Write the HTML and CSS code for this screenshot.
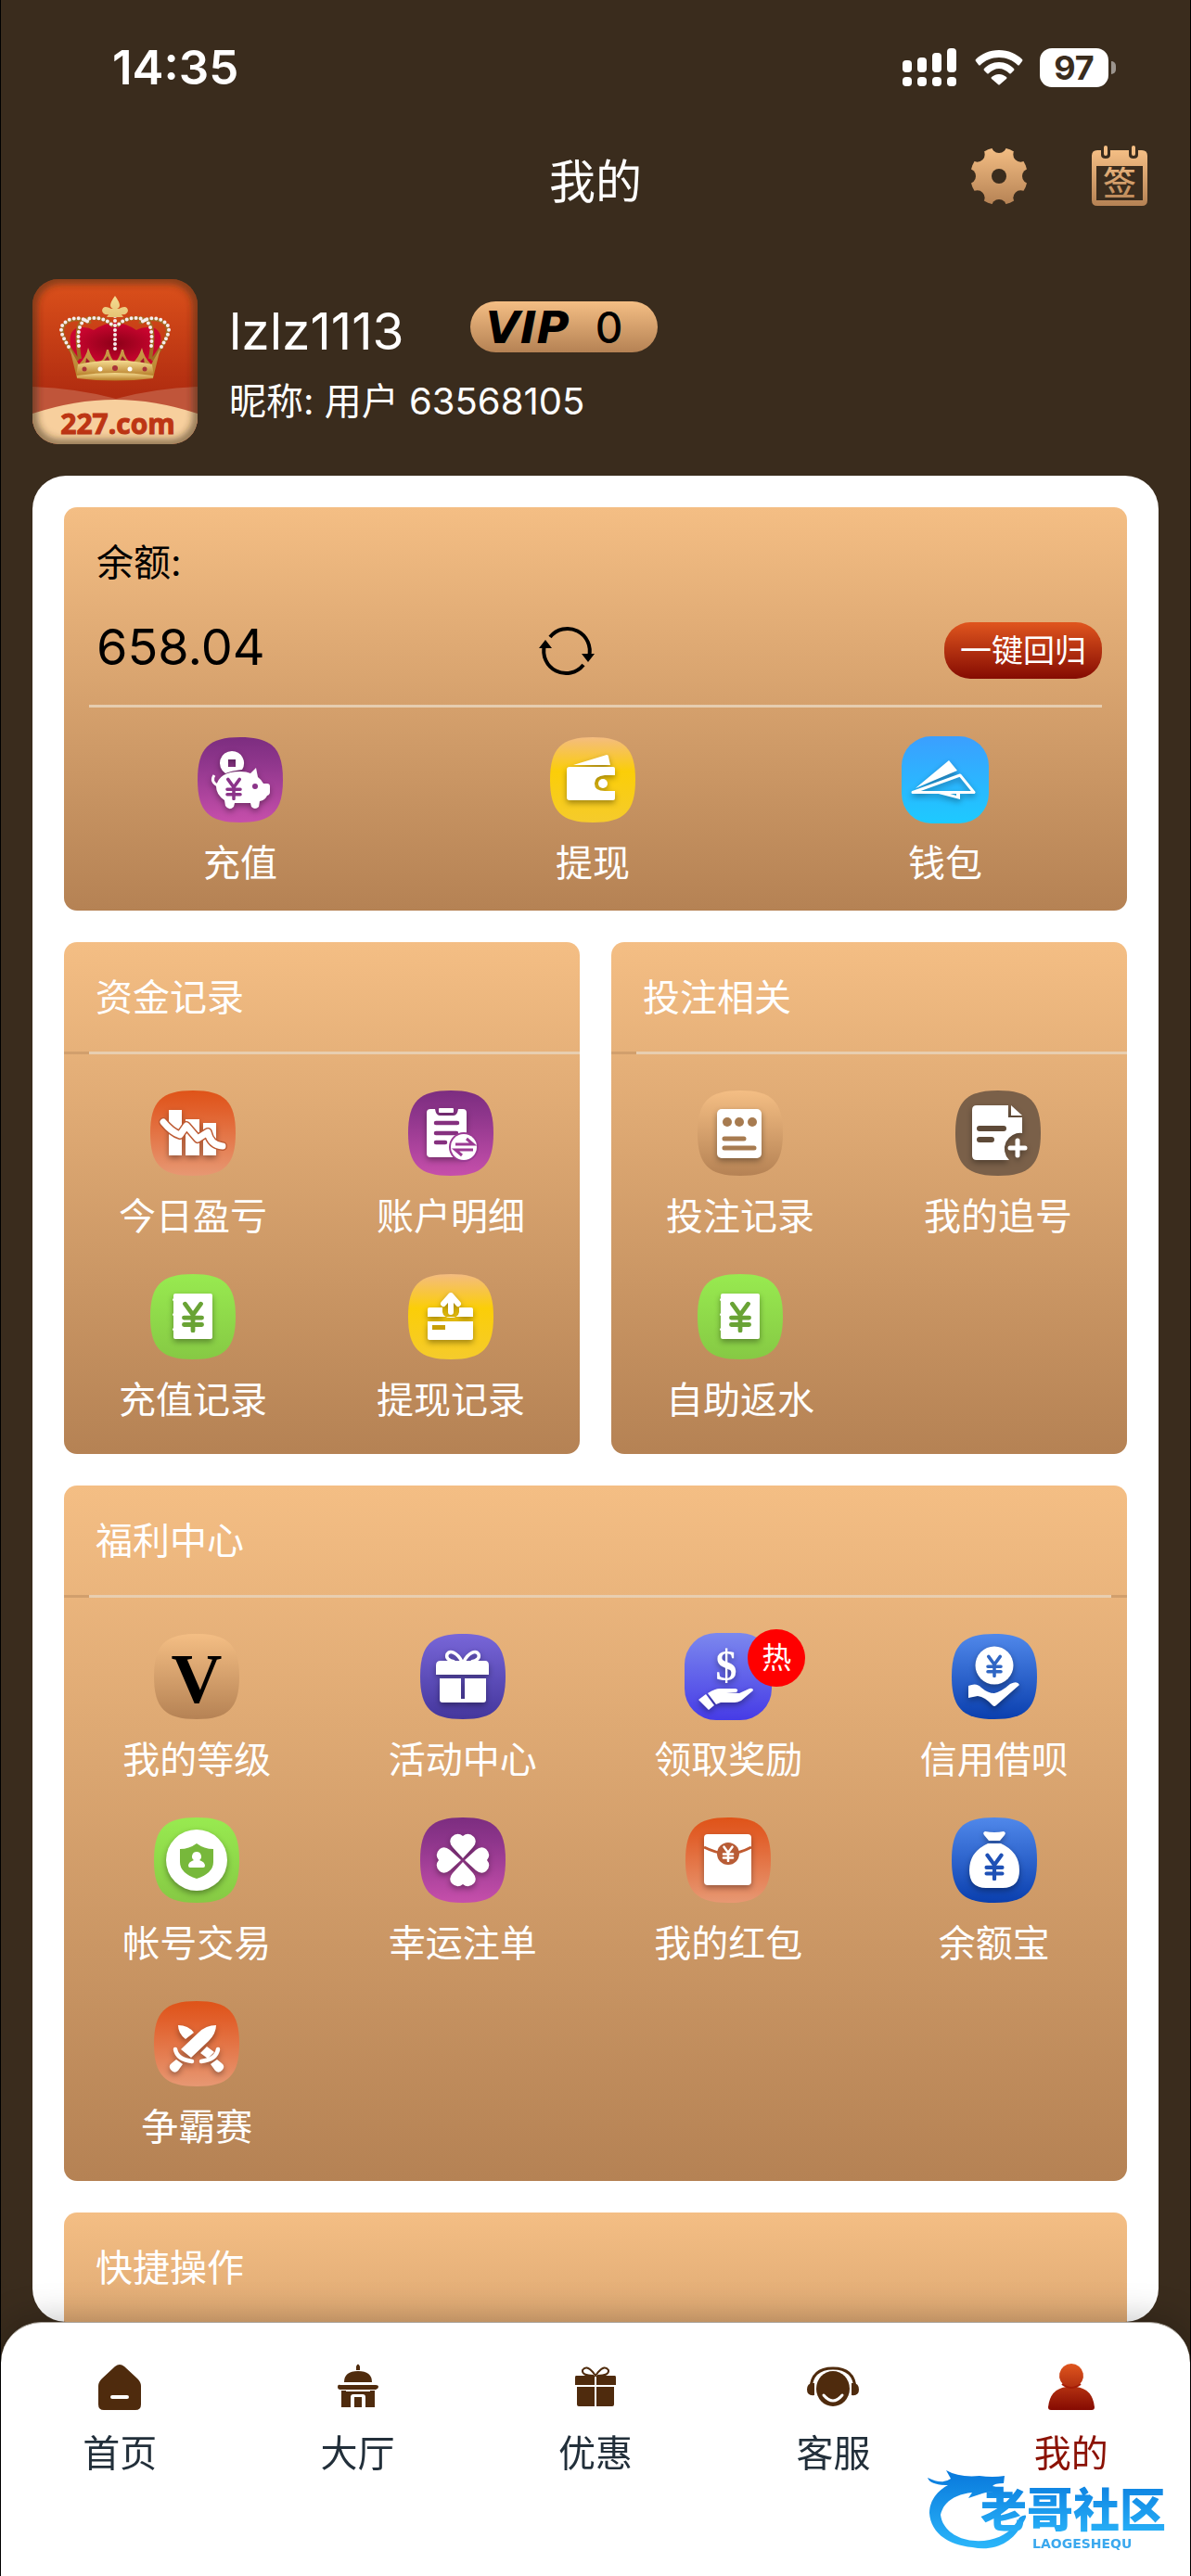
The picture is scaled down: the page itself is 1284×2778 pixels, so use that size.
FILE: index.html
```html
<!DOCTYPE html>
<html lang="zh-CN">
<head>
<meta charset="utf-8">
<meta name="viewport" content="width=device-width, initial-scale=1">
<title>我的</title>
<link rel="stylesheet" href="styles.css">
</head>
<body>
<svg class="defs" width="0" height="0" aria-hidden="true">
  <defs>
    <linearGradient id="g-purple" x1="0" y1="0" x2="0" y2="1"><stop offset="0" stop-color="#7c2d80"/><stop offset=".3" stop-color="#8f368c"/><stop offset="1" stop-color="#c64fab"/></linearGradient>
    <linearGradient id="g-yellow" x1="0" y1="0" x2="0" y2="1"><stop offset="0" stop-color="#f4bc80"/><stop offset=".4" stop-color="#fbce08"/><stop offset="1" stop-color="#f5cb2c"/></linearGradient>
    <linearGradient id="g-sky" x1="0" y1="0" x2="0" y2="1"><stop offset="0" stop-color="#3b9fff"/><stop offset="1" stop-color="#1dcaff"/></linearGradient>
    <linearGradient id="g-orange" x1="0" y1="0" x2="0" y2="1"><stop offset="0" stop-color="#df5318"/><stop offset=".2" stop-color="#e15e29"/><stop offset="1" stop-color="#e79873"/></linearGradient>
    <linearGradient id="g-green" x1="0" y1="0" x2="0" y2="1"><stop offset="0" stop-color="#98ea50"/><stop offset="1" stop-color="#86c944"/></linearGradient>
    <linearGradient id="g-tan" x1="0" y1="0" x2="0" y2="1"><stop offset="0" stop-color="#f4be84"/><stop offset="1" stop-color="#b58254"/></linearGradient>
    <linearGradient id="g-violet" x1="0" y1="0" x2="0" y2="1"><stop offset="0" stop-color="#7866d8"/><stop offset="1" stop-color="#44369c"/></linearGradient>
    <linearGradient id="g-indigo" x1="0" y1="0" x2="0" y2="1"><stop offset="0" stop-color="#7c88ee"/><stop offset="1" stop-color="#463be6"/></linearGradient>
    <linearGradient id="g-blue" x1="0" y1="0" x2="0" y2="1"><stop offset="0" stop-color="#5088ea"/><stop offset="1" stop-color="#0a3fae"/></linearGradient>
    <linearGradient id="g-red" x1="0" y1="0" x2="0" y2="1"><stop offset="0" stop-color="#e0561e"/><stop offset="1" stop-color="#850b02"/></linearGradient>
    <linearGradient id="g-gold" x1="0" y1="0" x2="0" y2="1"><stop offset="0" stop-color="#f6dd92"/><stop offset="1" stop-color="#b47a24"/></linearGradient>
    <linearGradient id="g-wave" x1="0" y1="0" x2="0" y2="1"><stop offset="0" stop-color="#0878dc"/><stop offset="1" stop-color="#2bb6fa"/></linearGradient>
    <symbol id="tile" viewBox="0 0 100 100"><path d="M50 4C84 4 96 16 96 50S84 96 50 96 4 84 4 50 16 4 50 4Z"/></symbol>
    <symbol id="yen" viewBox="-12 -16 24 32"><path d="M-8-13 0-2 8-13M0-2V14M-9 1H9M-9 8H9" fill="none" stroke="currentColor" stroke-width="4.500" stroke-linecap="round"/></symbol>
    <symbol id="book" viewBox="0 0 100 100"><path fill="#fff" d="M31 25h38q2 0 2 2v45q0 2-2 2H31q-2 0-2-2V65q-2-1 0-3V49q-2-1 0-3V33q-2-1 0-3v-3q0-2 2-2Z"/></symbol>
  </defs>
</svg>

<div class="app">
  <header class="top">
    <div class="status">
      <time class="clock">14:35</time>
      <div class="indicators">
        <svg width="60" height="42" viewBox="0 0 60 42" fill="#fff" aria-label="信号"><rect x="0" y="13" width="10" height="13" rx="4"/><rect x="16" y="10" width="10" height="16" rx="4"/><rect x="32" y="5" width="10" height="21" rx="4"/><rect x="48" y="0" width="10" height="26" rx="4"/><rect x="0" y="31" width="10" height="10" rx="4"/><rect x="16" y="31" width="10" height="10" rx="4"/><rect x="32" y="31" width="10" height="10" rx="4"/><rect x="48" y="31" width="10" height="10" rx="4"/></svg>
        <svg width="52" height="38" viewBox="0 0 52 38" fill="#fff" aria-label="无线网络"><path d="M26 0C16 0 7 4 1 10q-1 1 0 2l3 4q1 1 2 0c5-5 12-8 20-8s15 3 20 8q1 1 2 0l3-4q1-1 0-2C45 4 36 0 26 0Z"/><path d="M26 13c-7 0-12 3-16 7q-1 1 0 2l3 3q1 1 2 0c3-3 7-5 11-5s8 2 11 5q1 1 2 0l3-3q1-1 0-2c-4-4-9-7-16-7Z"/><path d="M26 26c-3 0-5 1-8 3q-1 1 0 2l7 6q1 1 2 0l7-6q1-1 0-2c-3-2-5-3-8-3Z"/></svg>
        <div class="battery"><span class="battery-level">97</span><i class="battery-tip"></i></div>
      </div>
    </div>

    <div class="titlebar">
      <h1 class="title">我的</h1>
      <div class="actions">
        <button class="icon-btn" aria-label="设置">
          <svg width="64" height="64" viewBox="0 0 64 64">
            <mask id="gear"><rect width="64" height="64" fill="#fff"/><circle cx="32" cy="32" r="8"/><g id="bites"><circle cx="32" cy="-1" r="8"/><circle cx="32" cy="65" r="8"/><circle cx="-1" cy="32" r="8"/><circle cx="65" cy="32" r="8"/></g><use href="#bites" transform="rotate(45 32 32)"/></mask>
            <circle cx="32" cy="32" r="31" fill="url(#g-tan)" mask="url(#gear)"/>
          </svg>
        </button>
        <button class="icon-btn" aria-label="签到">
          <svg width="64" height="66" viewBox="0 0 64 66"><path fill="url(#g-tan)" fill-rule="evenodd" d="M8 5h4v5q0 4 5 4t5-4V5h20v5q0 4 5 4t5-4V5h4q6 0 6 6v48q0 6-6 6H8q-6 0-6-6V11q0-6 6-6ZM7 22v37h50V22Z"/><rect x="15" y="0" width="4" height="11" rx="2" fill="#f4be84"/><rect x="45" y="0" width="4" height="11" rx="2" fill="#f4be84"/><text class="sign" x="32" y="54" text-anchor="middle" fill="url(#g-tan)">签</text></svg>
        </button>
      </div>
    </div>

    <section class="profile">
      <svg class="avatar" viewBox="0 0 178 178" role="img" aria-label="227.com">
        <defs>
          <linearGradient id="avatar-bg" x1="0" y1="0" x2="0" y2="1"><stop offset="0" stop-color="#dc511b"/><stop offset=".7" stop-color="#b02c10"/></linearGradient>
          <radialGradient id="velvet"><stop offset="0" stop-color="#8d0018"/><stop offset="1" stop-color="#cc0530"/></radialGradient>
          <filter id="soft"><feGaussianBlur stdDeviation="4"/></filter>
        </defs>
        <rect width="178" height="178" fill="url(#avatar-bg)"/>
        <path fill="#c0553a" d="M0 116Q50 118 90 129 130 118 178 116v40H0Z"/>
        <path fill="#f7cf9d" d="M0 145Q46 130 89 130t89 15v33H0Z"/>
        <path fill="url(#velvet)" d="M45 84Q35 60 47 53 58 50 66 55q12-8 23-8t23 8q8-5 20-2 12 7 2 31l-6 8H50Z"/>
        <path fill="none" stroke="#a06a22" stroke-width="4" d="M49 88C36 70 28 57 34 49c8-9 26-6 28-1M129 88c13-18 21-31 15-39-8-9-26-6-28-1M51 86C45 50 50 42 66 42q14 0 21 9M127 86c6-36 1-44-15-44q-14 0-21 9"/>
        <path fill="none" stroke="#f6ecec" stroke-width="4" stroke-linecap="round" stroke-dasharray="0 5" d="M39 73C30 58 28 52 36 46c8-6 22-5 26 3M139 73c9-15 11-21 3-27-8-6-22-5-26 3M50 72c-2-20 2-30 16-30q14 0 21 9M128 72c2-20-2-30-16-30q-14 0-21 9M89 40v38"/>
        <path fill="url(#g-gold)" d="M89 18q-5 7-5 10 0 3 3 4h-2q-9-5-10 2 1 5 7 4l-2 3h18l-2-3q6 1 7-4-1-7-10-2h-2q3-1 3-4 0-3-5-10ZM40 74l10 18q8-8 10-18 4 12 10 16 8-2 10-14h2q2 9 7 14 5-5 7-14h2q2 12 10 14 6-4 10-16 2 10 10 18l10-18-8 33H48Z"/>
        <path fill="#a2152c" d="m58 85 4 4-5 4Zm23-2 3 6-9 2Zm16 0-3 6 9 2Zm23 2-4 4 5 4Z"/>
        <path fill="url(#g-gold)" d="M49 92q40-9 80 0l2 13q-42-7-84 0Z"/><path fill="url(#g-gold)" d="M48 104q41-6 82 0v3q-41 5-82 0Z"/>
        <g fill="#a93438"><circle cx="56" cy="97" r="2.500"/><circle cx="89" cy="96" r="3"/><circle cx="121" cy="97" r="2.500"/></g><g fill="#fff"><circle cx="73" cy="97" r="2.500"/><circle cx="105" cy="97" r="2.500"/></g>
        <text class="avatar-name" x="92" y="167" text-anchor="middle">227.com</text>
        <rect width="178" height="178" rx="30" fill="none" stroke="#3a2c1d" stroke-opacity=".7" stroke-width="8" filter="url(#soft)"/>
      </svg>
      <div class="who">
        <div class="name-row"><span class="name">lzlz1113</span><span class="vip"><b>VIP</b><span>0</span></span></div>
        <p class="nick">昵称: 用户 63568105</p>
      </div>
    </section>
  </header>

  <main class="panel">
    <section class="card">
      <div class="balance">
        <p class="balance-label">余额:</p>
        <div class="balance-row">
          <span class="amount">658.04</span>
          <button class="icon-btn refresh" aria-label="刷新余额">
            <svg width="60" height="56" viewBox="0 0 60 56"><path d="M12 13A24 24 0 0 1 54 34M48 43A24 24 0 0 1 6 22" fill="none" stroke="#000" stroke-width="4"/><path d="m0 25 7-9 7 9ZM46 31h14l-7 9Z"/></svg>
          </button>
          <button class="recall">一键回归</button>
        </div>
      </div>
      <div class="grid three">
        <a class="item" href="#deposit"><svg class="ico" viewBox="0 0 100 100"><use href="#tile" fill="url(#g-purple)"/><g class="glyph"><path fill-rule="evenodd" d="M41 19a13 13 0 0 1 11 20q-11 1-18 4a13 13 0 0 1 7-24Zm-4 9v8h8v-8Z"/><path d="M50 41q7 0 11 2l6-6 2 10q4 3 6 7h4q3 0 3 3v6q0 3-3 4-2 5-8 6l-1 6q-4 4-8 0l-1-4H44l-1 4q-5 5-9-1l-1-6q-9-6-9-15 3-16 26-16Z"/><path d="M27 57Q17 52 22 45" fill="none" stroke="#fff" stroke-width="3"/></g><circle cx="66" cy="57" r="3" fill="#8b3489"/><use href="#yen" x="33" y="47" width="20" height="25" color="#8b3489"/></svg><span>充值</span></a>
        <a class="item" href="#withdraw"><svg class="ico" viewBox="0 0 100 100"><use href="#tile" fill="url(#g-yellow)"/><g class="glyph"><path d="M29 34 65 23q2 0 2 2l2 9Z"/><path d="M25 36h47q2 0 2 2v7H63q-11 1-11 9t11 8h11v8q0 2-2 2H25q-3 0-3-3V39q0-3 3-3Z"/><circle cx="61" cy="54" r="5"/></g></svg><span>提现</span></a>
        <a class="item" href="#wallet"><svg class="ico" viewBox="0 0 100 100"><rect x="3" y="3" width="94" height="94" rx="32" fill="url(#g-sky)"/><g class="glyph"><path d="M18 59 54 29l9 11Z"/><path d="M15 63.500 66 45l15 18.500Z" fill="none" stroke="#fff" stroke-width="3" stroke-linejoin="round"/><path d="m39 64 27 7V64l-4 0v3l-10-3Z"/></g></svg><span>钱包</span></a>
      </div>
    </section>

    <div class="pair">
      <section class="card">
        <h2 class="head">资金记录</h2>
        <div class="grid two">
          <a class="item" href="#profit"><svg class="ico" viewBox="0 0 100 100"><use href="#tile" fill="url(#g-orange)"/><g class="glyph"><path d="M24 25h14v49H24ZM42 35h15v39H42ZM61 39h14v35H61Z"/></g><g fill="none" stroke-linecap="round" stroke-linejoin="round"><path d="M18 38Q27 49 36 52L43 42 55 56 66 49Q69 63 82 64" stroke="#bd5a33" stroke-width="10"/><path d="M18 38Q27 49 36 52L43 42 55 56 66 49Q69 63 82 64" stroke="#fff" stroke-width="7"/></g></svg><span>今日盈亏</span></a>
          <a class="item" href="#detail"><svg class="ico" viewBox="0 0 100 100"><use href="#tile" fill="url(#g-purple)"/><g class="glyph"><path d="M28 24h5q1 7 5 7h15q4 0 5-7h5q4 0 4 4v44q0 4-4 4H28q-4 0-4-4V28q0-4 4-4Z"/><rect x="37" y="23" width="16" height="5" rx="1"/></g><path d="M34 39h23M34 50h22M34 60h10" stroke="#85307f" stroke-width="4.500" stroke-linecap="round"/><circle cx="64" cy="65" r="16" fill="#9b3a93"/><circle cx="64" cy="65" r="14" fill="#fff"/><path d="M55 62h19l-7-6M74 68H55l7 6" fill="none" stroke="#9b3a93" stroke-width="3"/></svg><span>账户明细</span></a>
          <a class="item" href="#deposit-log"><svg class="ico" viewBox="0 0 100 100"><use href="#tile" fill="url(#g-green)"/><g class="glyph"><use href="#book"/></g><use href="#yen" x="35" y="33" width="30" height="34" color="#69a335"/></svg><span>充值记录</span></a>
          <a class="item" href="#withdraw-log"><svg class="ico" viewBox="0 0 100 100"><use href="#tile" fill="url(#g-yellow)"/><g class="glyph"><path d="M27 40h14v5q1 6 9 6t9-6v-5h13q2 0 2 2v8H25v-8q0-2 2-2ZM25 55h49v18q0 2-2 2H27q-2 0-2-2Z"/><path d="m42 36 8-9 8 9M50 28v17" fill="none" stroke="#fff" stroke-width="6" stroke-linecap="round" stroke-linejoin="round"/></g><path d="M30 59h14v5H30Z" fill="#c79e08"/></svg><span>提现记录</span></a>
        </div>
      </section>

      <section class="card">
        <h2 class="head">投注相关</h2>
        <div class="grid two">
          <a class="item" href="#bets"><svg class="ico" viewBox="0 0 100 100"><use href="#tile" fill="url(#g-tan)"/><g class="glyph"><rect x="25" y="24" width="48" height="53" rx="5"/></g><g fill="#a77b50"><circle cx="36" cy="38" r="5"/><circle cx="49" cy="38" r="5"/><circle cx="63" cy="38" r="5"/></g><path d="M33 56h21M33 66h32" stroke="#a77b50" stroke-width="5" stroke-linecap="round"/></svg><span>投注记录</span></a>
          <a class="item" href="#chase"><svg class="ico" viewBox="0 0 100 100"><use href="#tile" fill="#7a6049"/><g class="glyph"><path d="M27 20h34v13h15v17A17 17 0 0 0 62 79H27q-5 0-5-5V25q0-5 5-5Z"/><path d="m64 20 12 11H64Z"/><path d="M71 58v16M63 66h16" stroke="#fff" stroke-width="5" stroke-linecap="round"/></g><path d="M30 45h26M30 57h13" stroke="#5e4a38" stroke-width="6" stroke-linecap="round"/></svg><span>我的追号</span></a>
          <a class="item" href="#rebate"><svg class="ico" viewBox="0 0 100 100"><use href="#tile" fill="url(#g-green)"/><g class="glyph"><use href="#book"/></g><use href="#yen" x="35" y="33" width="30" height="34" color="#69a335"/></svg><span>自助返水</span></a>
        </div>
      </section>
    </div>

    <section class="card">
      <h2 class="head wide">福利中心</h2>
      <div class="grid four">
        <a class="item" href="#level"><svg class="ico" viewBox="0 0 100 100"><use href="#tile" fill="url(#g-tan)"/><text class="vee" x="50" y="78" text-anchor="middle">V</text></svg><span>我的等级</span></a>
        <a class="item" href="#events"><svg class="ico" viewBox="0 0 100 100"><use href="#tile" fill="url(#g-violet)"/><g class="glyph"><path d="M26 33h48q4 0 4 5v10H21V38q0-5 5-5ZM25 52h23v22h4V52h23v23q0 3-3 3H28q-3 0-3-3Z"/><path d="M49 34C44 24 36 21 33 26q-2 6 8 8M51 34c5-10 13-13 16-8q2 6-8 8" fill="none" stroke="#fff" stroke-width="3.500"/></g></svg><span>活动中心</span></a>
        <a class="item" href="#rewards"><svg class="ico" viewBox="0 0 100 100"><rect x="3" y="3" width="94" height="94" rx="34" fill="url(#g-indigo)"/><g class="glyph"><text class="dollar" x="48" y="54" text-anchor="middle">$</text><path d="m18 75 8-6 9 12-6 5ZM28 68q8-5 13-5h17q4 1 1 4H48l14 1 11-5q4-1 4 2L64 76q-4 2-7 2H42l-5 2Z"/></g></svg><em class="hot">热</em><span>领取奖励</span></a>
        <a class="item" href="#credit"><svg class="ico" viewBox="0 0 100 100"><use href="#tile" fill="url(#g-blue)"/><g class="glyph"><circle cx="50" cy="38" r="20.500"/><path d="M22 60q9-4 14 2 7 6 14 6 8-2 17-10 8-4 10 1L52 81q-2 2-4 0-8-9-16-10l-10 2Z"/></g><use href="#yen" x="38" y="26" width="24" height="25" color="#2f66c4"/></svg><span>信用借呗</span></a>
        <a class="item" href="#trade"><svg class="ico" viewBox="0 0 100 100"><use href="#tile" fill="url(#g-green)"/><g class="glyph"><circle cx="50" cy="50" r="33"/></g><path fill="#77b83b" d="M50 32q8 6 18 6v14q0 12-18 18-18-6-18-18V38q10 0 18-6Z"/><path fill="#fff" d="M50 41a5 5 0 0 1 3 9q6 2 6 6 0 2-2 2H43q-2 0-2-2 0-4 6-6a5 5 0 0 1 3-9Z"/></svg><span>帐号交易</span></a>
        <a class="item" href="#lucky"><svg class="ico" viewBox="0 0 100 100"><use href="#tile" fill="url(#g-purple)"/><g class="glyph"><path id="leaf" d="M50 48 39 36q-5-6-1-11 6-6 12-1 6-5 12 1 4 5-1 11Z"/><use href="#leaf" transform="rotate(90 50 50)"/><use href="#leaf" transform="rotate(180 50 50)"/><use href="#leaf" transform="rotate(270 50 50)"/></g></svg><span>幸运注单</span></a>
        <a class="item" href="#packet"><svg class="ico" viewBox="0 0 100 100"><use href="#tile" fill="url(#g-orange)"/><g class="glyph"><rect x="24" y="22" width="51" height="55" rx="4"/></g><path d="M24 36q12 6 26 8 14-2 25-8" fill="none" stroke="#c05a30" stroke-width="3"/><circle cx="50" cy="43" r="12" fill="#b85c36"/><use href="#yen" x="41" y="34" width="18" height="18" color="#fff"/></svg><span>我的红包</span></a>
        <a class="item" href="#yuebao"><svg class="ico" viewBox="0 0 100 100"><use href="#tile" fill="url(#g-blue)"/><g class="glyph"><path d="M40 19q10 2 20 0 3 1 1 4l-5 6H44l-5-6q-2-3 1-4ZM43 32h14q20 9 20 29 0 19-18 19H41q-18 0-18-19 0-20 20-29Z"/></g><use href="#yen" x="36" y="42" width="28" height="30" color="#1f51b6"/></svg><span>余额宝</span></a>
        <a class="item" href="#contest"><svg class="ico" viewBox="0 0 100 100"><use href="#tile" fill="url(#g-orange)"/><g class="glyph"><path d="M30 30q11 0 17 8L38 45q-8-6-8-15ZM71 30q0 9-8 17L44 65 33 56 52 38Q60 30 71 30ZM61 53l8 6-7 7-8-6Z"/><path d="M27 56q2 11 18 13M73 56q-2 11-18 13" fill="none" stroke="#fff" stroke-width="4.500" stroke-linecap="round"/><path d="m28 67 7 5-5 7q-4 4-8-1-3-4 1-7ZM72 67l-7 5 5 7q4 4 8-1 3-4-1-7Z"/></g></svg><span>争霸赛</span></a>
      </div>
    </section>

    <section class="card quick">
      <h2 class="head wide">快捷操作</h2>
    </section>
  </main>

  <nav class="tabs">
    <a href="#home"><svg viewBox="0 0 60 60"><path fill-rule="evenodd" d="M25 10q5-4 10 0l14 13q4 4 4 8v20q0 6-6 6H13q-6 0-6-6V31q0-4 4-8ZM22 41q-2 0-2 2t2 2h16q2 0 2-2t-2-2Z"/></svg><span>首页</span></a>
    <a href="#hall"><svg viewBox="0 0 60 60"><path d="M28 10q2-5 4 0v4h-4ZM15 27q0-12 15-12t15 12ZM11 30h38q3 0 3 2t-3 3H11q-3 0-3-3t3-2ZM12 36h36v18H38V43q0-3-3-3H25q-3 0-3 3v11H12Z"/><path d="M26 43h8v11h-8Z"/><path d="M17 36h26" stroke="#fff" stroke-width="2"/></svg><span>大厅</span></a>
    <a href="#promo"><svg viewBox="0 0 60 60"><path d="M9 20h20v10H8v-8q0-2 1-2ZM31 20h20q1 0 1 2v8H31ZM10 32h19v21H12q-2 0-2-2ZM31 32h19v19q0 2-2 2H31Z"/><path d="M28 20q-13 0-12-6 4-6 11 2l3 4 3-4q7-8 11-2 1 6-12 6" fill="none" stroke="#4f2b0d" stroke-width="2"/></svg><span>优惠</span></a>
    <a href="#service"><svg viewBox="0 0 60 60"><ellipse cx="30" cy="34" rx="18" ry="19"/><path d="M6 34Q7 12 30 12t24 22" fill="none" stroke="#4f2b0d" stroke-width="3"/><path d="M10 28q-8-1-8 7 0 7 8 6ZM50 28q8-1 8 7 0 7-8 6Z"/><path d="M20 41q10 12 20 0" fill="none" stroke="#fff" stroke-width="3" stroke-linecap="round"/></svg><span>客服</span></a>
    <a class="active" href="#me" aria-current="page"><svg viewBox="0 0 60 60"><path fill="url(#g-red)" d="M30 7a13 13 0 0 1 5 25q18 2 20 22 0 3-3 3H8q-3 0-3-3 2-20 20-22A13 13 0 0 1 30 7Z"/><path d="M20 29q10 8 20 0" fill="none" stroke="#a41c06" stroke-width="2"/></svg><span>我的</span></a>
    <svg class="mark" width="266" height="92" viewBox="0 0 266 92" role="img" aria-label="老哥社区">
      <path fill="url(#g-wave)" d="M1 12q16 8 25 1l-5-9q14 8 36 6 14 2 27 0l-1 8q-10 0-12 3l10 2-4 6q-10-3-17 0l-15 5 4-6C31 30 18 38 15 52c3 22 29 32 53 27 15-3 26-12 32-24 10-6 8 0 3 7C93 82 73 92 49 87 22 85 4 70 3 50 3 38 10 27 23 20 12 20 3 18 1 12Z"/>
      <text class="mark-cn" x="58" y="65" fill="url(#g-wave)">老哥社区</text>
      <text class="mark-en" x="114" y="88" fill="#3ba8ee">LAOGESHEQU</text>
    </svg>
  </nav>
</div>
</body>
</html>
```
FILE: styles.css
```css
* { box-sizing: border-box; margin: 0; padding: 0; }

body {
  background: #3a2c1d;
  color: #fff;
  font: 400 40px/56px Inter, "Noto Sans CJK SC", sans-serif;
}

button { border: 0; background: none; font: inherit; color: inherit; cursor: pointer; }
a { color: inherit; text-decoration: none; }
svg { display: block; }
.defs { position: absolute; }

.app {
  display: flex;
  flex-direction: column;
  height: 100vh;
  border: solid #000;
  border-width: 0 1px;
}

/* status bar */
.status {
  display: flex;
  justify-content: space-between;
  align-items: center;
  height: 146px;
  padding: 0 80px 0 120px;
}
.clock { font-size: 51px; font-weight: 600; }
.indicators { display: flex; align-items: center; gap: 18px; }
.battery { display: flex; align-items: center; gap: 3px; }
.battery-level {
  width: 74px;
  border-radius: 13px;
  background: #fff;
  color: #3a2c1d;
  font-size: 36px;
  font-weight: 700;
  line-height: 42px;
  text-align: center;
}
.battery-tip { width: 5px; height: 14px; border-radius: 0 5px 5px 0; background: #9c958e; }

/* title bar */
.titlebar {
  display: grid;
  grid-template-columns: 1fr auto 1fr;
  align-items: center;
  height: 88px;
  padding: 0 44px;
}
.title { grid-column: 2; padding-top: 12px; font-size: 50px; font-weight: 400; line-height: 64px; }
.actions { display: flex; justify-content: flex-end; gap: 66px; }
.sign { font: 500 36px "Noto Sans CJK SC", sans-serif; }

/* profile */
.profile { display: flex; gap: 34px; padding: 67px 34px 34px; }
.avatar { flex: none; width: 178px; height: 178px; border-radius: 28px; }
.avatar-name { font: 700 30px "Open Sans", sans-serif; fill: #bd3514; stroke: #bd3514; stroke-width: 1; }
.who { padding-top: 24px; }
.name-row { display: flex; align-items: flex-start; gap: 72px; height: 80px; }
.name { font-size: 55px; line-height: 64px; }
.vip {
  display: flex;
  align-items: center;
  gap: 28px;
  height: 55px;
  padding: 0 38px 0 16px;
  border-radius: 28px;
  background: linear-gradient(#f4be84, #b58254);
  color: #000;
  font-size: 46px;
  font-weight: 500;
}
.vip b { font: italic 700 48px "DejaVu Sans", sans-serif; }

/* main panel */
.panel {
  display: flex;
  flex: 1;
  flex-direction: column;
  gap: 34px;
  min-height: 0;
  margin: 0 34px;
  padding: 34px;
  overflow-y: auto;
  scrollbar-width: none;
  border-radius: 36px;
  background: #fff;
}
.card {
  flex: none;
  overflow: hidden;
  border-radius: 14px;
  background: linear-gradient(#f4be84, #b58254);
}
.pair { display: grid; flex: none; grid-template-columns: 1fr 1fr; gap: 34px; }
.quick { min-height: 354px; }

.balance {
  margin: 0 27px 28px;
  padding: 32px 0 28px 8px;
  border-bottom: 3px solid #e6cdb0;
}
.balance-label { color: #000; }
.balance-row {
  display: grid;
  grid-template-columns: 11fr 14fr auto;
  grid-template-columns: 44% 1fr auto;
  align-items: center;
  margin-top: 36px;
}
.amount { color: #000; font-size: 54px; line-height: 53px; padding-bottom: 8px; }
.refresh { justify-self: start; }
.recall {
  padding: 0 17px;
  border-radius: 28px;
  background: linear-gradient(#e0561e, #850b02);
  font-size: 34px;
  line-height: 61px;
}

.head { padding: 32px 34px 30px; font-size: 40px; font-weight: 400; }
.head::after {
  content: "";
  display: block;
  height: 3px;
  margin: 30px -34px -30px;
  border-left: 27px solid #d19f6d;
  background: #e8ceb0;
}
.wide::after { border-right: 17px solid #d19f6d; }

.grid { display: grid; }
.two { grid-template-columns: 1fr 1fr; padding-top: 35px; }
.three { grid-template-columns: 1fr 1fr 1fr; padding-right: 6px; }
.four { grid-template-columns: repeat(4, 1fr); padding-top: 35px; }

.item {
  position: relative;
  display: flex;
  flex-direction: column;
  align-items: center;
  gap: 12px;
  padding-bottom: 30px;
}
.three .item { padding-bottom: 23px; }
.ico { width: 100px; height: 100px; }
.glyph { fill: #fff; filter: drop-shadow(0 3px 3px rgba(0, 0, 0, .35)); }
.vee { font: 700 76px "Liberation Serif", serif; }
.dollar { font: 700 46px "Liberation Serif", serif; }
.hot {
  position: absolute;
  top: -1px;
  left: 50%;
  width: 62px;
  height: 62px;
  margin-left: 21px;
  border-radius: 50%;
  background: #f00;
  font-size: 32px;
  font-style: normal;
  line-height: 62px;
  text-align: center;
}

/* bottom tabs */
.tabs {
  position: relative;
  display: grid;
  grid-template-columns: repeat(5, 1fr);
  align-items: start;
  height: 274px;
  padding-top: 37px;
  border-top: 1px solid #aaa49c;
  border-radius: 44px 44px 0 0;
  background: #fff;
  color: #222f3a;
  box-shadow: 0 0 40px rgba(0, 0, 0, .28);
}
.tabs a { display: flex; flex-direction: column; align-items: center; gap: 16px; }
.tabs a svg { width: 60px; height: 60px; fill: #4f2b0d; }
.tabs .active { color: #8b1204; }
.mark { position: absolute; right: 18px; bottom: 26px; }
.mark-cn { font: 900 50px "Noto Sans CJK SC", sans-serif; }
.mark-en { font: 700 14px "DejaVu Sans", sans-serif; }
```
